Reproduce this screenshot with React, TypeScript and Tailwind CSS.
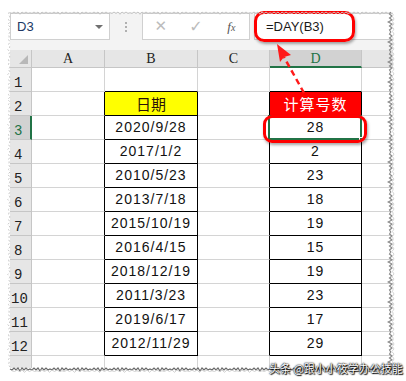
import React from "react";

const rows = [
  { date: "2020/9/28", day: "28" },
  { date: "2017/1/2", day: "2" },
  { date: "2010/5/23", day: "23" },
  { date: "2013/7/18", day: "18" },
  { date: "2015/10/19", day: "19" },
  { date: "2016/4/15", day: "15" },
  { date: "2018/12/19", day: "19" },
  { date: "2011/3/23", day: "23" },
  { date: "2019/6/17", day: "17" },
  { date: "2012/11/29", day: "29" },
];

const cols = ["A", "B", "C", "D"];

function zigzag(x1: number, y1: number, x2: number, y2: number, amp: number, step: number) {
  const pts: string[] = [];
  const len = Math.hypot(x2 - x1, y2 - y1);
  const n = Math.floor(len / step);
  const ux = (x2 - x1) / len;
  const uy = (y2 - y1) / len;
  for (let i = 0; i <= n; i++) {
    const o = (i % 2 === 0 ? 0 : amp) + ((i * 7) % 5 === 0 ? amp * 0.5 : 0);
    pts.push(`${x1 + ux * i * step - uy * o},${y1 + uy * i * step + ux * o}`);
  }
  return pts.join(" ");
}

function TornEdges() {
  return (
    <svg className="pointer-events-none absolute left-0 top-0" width="406" height="381">
      <polyline points={zigzag(10, 12, 393, 12, 1.5, 2)} fill="none" stroke="#c4c4c4" strokeWidth="1" />
      <polyline points={zigzag(10, 12, 10, 368, 1.5, 2.5)} fill="none" stroke="#c8c8c8" strokeWidth="1" strokeDasharray="2 2" />
      <polyline points={zigzag(392, 12, 392, 370, 2.5, 2)} fill="none" stroke="#8c8c8c" strokeWidth="1.2" />
      <polyline points={zigzag(394, 14, 394, 372, 1.5, 2.5)} fill="none" stroke="#d6d6d6" strokeWidth="1" />
      <polyline points={zigzag(10, 368, 393, 368, 2, 2)} fill="none" stroke="#6a6a6a" strokeWidth="1.2" />
      <polyline points={zigzag(12, 370, 394, 370, 1.5, 2.5)} fill="none" stroke="#cfcfcf" strokeWidth="1" />
    </svg>
  );
}

function Arrow() {
  return (
    <svg className="pointer-events-none absolute left-0 top-0" width="406" height="381">
      <line x1="304" y1="93" x2="284" y2="57" stroke="#ff1a1a" strokeWidth="2.5" strokeDasharray="6 4" />
      <polygon points="277,44 291,55 284,57 280,62" fill="#ff1a1a" />
    </svg>
  );
}

export default function App() {
  const cell = "border-r border-b border-[#d4d4d4]";
  const num = "flex items-center justify-center text-[14px] tracking-[1px] text-[#111] [font-family:'Liberation_Sans',Arial,sans-serif]";
  return (
    <div className="relative h-[381px] w-[406px] overflow-hidden bg-white pl-[10px] pt-[12px]">
      <div className="h-[356px] w-[383px] overflow-hidden bg-[#f3f3f3]">
        {/* formula bar */}
        <div className="flex h-[38px] items-start pt-[1px]">
          <div className="flex h-[27px] w-[100px] items-center justify-between border border-[#d0d0d0] bg-white pl-[6px] pr-[6px]">
            <span className="text-[13px] text-[#203864] [font-family:'Liberation_Sans',Arial,sans-serif]">D3</span>
            <span className="h-0 w-0 border-x-[4px] border-t-[4px] border-x-transparent border-t-[#707070]" />
          </div>
          <div className="ml-[15px] mt-[9px] flex h-[10px] flex-col justify-between">
            <span className="h-[2px] w-[2px] bg-[#b0b0b0]" />
            <span className="h-[2px] w-[2px] bg-[#b0b0b0]" />
            <span className="h-[2px] w-[2px] bg-[#b0b0b0]" />
          </div>
          <div className="ml-[15px] flex h-[27px] w-[108px] items-center border border-[#d0d0d0] bg-white text-[#bcbcbc]">
            <span className="w-[36px] text-center text-[15px] leading-none [font-family:'DejaVu_Sans',sans-serif]">✕</span>
            <span className="w-[36px] text-center text-[16px] leading-none [font-family:'DejaVu_Sans',sans-serif]">✓</span>
            <span className="w-[36px] text-center text-[13px] italic text-[#555] [font-family:'Liberation_Serif',serif]">f<span className="text-[10px]">x</span></span>
          </div>
          <div className="ml-[4px] flex h-[27px] flex-1 items-center border border-r-0 border-[#d0d0d0] bg-white pl-[11px]">
            <span className="text-[13px] text-[#1a1a1a] [font-family:'Liberation_Sans',Arial,sans-serif]">=DAY(B3)</span>
          </div>
        </div>

        {/* sheet grid */}
        <div className="grid grid-cols-[22px_73px_93px_72px_92px_31px] grid-rows-[18px_repeat(13,24px)] bg-white">
          <div className="flex items-end justify-end border-r border-b border-[#c6c6c6] bg-[#e6e6e6] pb-[3px] pr-[3px]">
            <span className="h-0 w-0 border-b-[9px] border-l-[9px] border-b-[#b8b8b8] border-l-transparent" />
          </div>
          {cols.map((c) => (
            <div
              key={c}
              className={`flex items-center justify-center border-r border-[#c6c6c6] text-[14px] [font-family:'Liberation_Serif',serif] ${c === "D" ? "border-b-2 border-b-[#217346] bg-[#d2d2d2] text-[#217346]" : "border-b bg-[#e6e6e6] text-[#222]"}`}
            >
              {c}
            </div>
          ))}
          <div className="border-b border-[#c6c6c6] bg-[#e6e6e6]" />

          {/* row 1 */}
          <div className="flex items-end border-r border-b border-[#c6c6c6] bg-[#e6e6e6] pb-[1px] pl-[4px] text-[14px] leading-none text-[#222] [font-family:'Liberation_Mono',monospace]">1</div>
          <div className={cell} />
          <div className={`${cell} border-b-black`} />
          <div className={cell} />
          <div className={`${cell} border-b-black`} />
          <div className="border-b border-[#d4d4d4]" />

          {/* row 2 header */}
          <div className="flex items-end border-r border-b border-[#c6c6c6] bg-[#e6e6e6] pb-[1px] pl-[4px] text-[14px] leading-none text-[#222] [font-family:'Liberation_Mono',monospace]">2</div>
          <div className="border-r border-b border-r-black border-b-[#d4d4d4]" />
          <div className="flex items-center justify-center border-r border-b border-black bg-[#ffff00] pt-[1px] text-[15px] text-[#2a1208] [font-family:'Noto_Sans_CJK_SC',sans-serif]">日期</div>
          <div className="border-r border-b border-r-black border-b-[#d4d4d4]" />
          <div className="flex items-center justify-center border-r border-b border-black bg-[#ff0000] pt-[1px] text-[15px] tracking-[1px] text-white [font-family:'Noto_Sans_CJK_SC',sans-serif]">计算号数</div>
          <div className="border-b border-[#d4d4d4]" />

          {rows.map((r, i) => {
            const n = i + 3;
            const sel = n === 3;
            return (
              <React.Fragment key={n}>
                <div
                  className={`flex items-end border-b border-[#c6c6c6] pb-[1px] text-[14px] leading-none [font-family:'Liberation_Mono',monospace] ${sel ? "border-r-2 border-r-[#217346] bg-[#d2d2d2] text-[#217346]" : "border-r bg-[#e6e6e6] text-[#222]"} ${n >= 10 ? "pl-[1px]" : "pl-[4px]"}`}
                >
                  {n}
                </div>
                <div className="border-r border-b border-r-black border-b-[#d4d4d4]" />
                <div className={`${num} border-r border-b border-black`}>{r.date}</div>
                <div className="border-r border-b border-r-black border-b-[#d4d4d4]" />
                <div className={`${num} relative border-r border-b border-black`}>
                  {r.day}
                  {sel && (
                    <>
                      <span className="absolute -left-[2px] -top-[1px] bottom-[-1px] right-[-1px] border-2 border-[#217346]" />
                      <span className="absolute -bottom-[3px] -right-[3px] h-[5px] w-[5px] border border-white bg-[#217346]" />
                    </>
                  )}
                </div>
                <div className="border-b border-[#d4d4d4]" />
              </React.Fragment>
            );
          })}

          {/* row 13 */}
          <div className="border-r border-[#c6c6c6] bg-[#e6e6e6]" />
          <div className="border-r border-[#d4d4d4]" />
          <div className="border-r border-[#d4d4d4]" />
          <div className="border-r border-[#d4d4d4]" />
          <div className="border-r border-[#d4d4d4]" />
          <div />
        </div>
      </div>

      {/* callouts */}
      <div className="pointer-events-none absolute left-[254px] top-[11px] h-[31px] w-[101px] rounded-[10px] border-[3px] border-[#ff0000] shadow-[1px_2px_3px_rgba(0,0,0,0.35)]" />
      <div className="pointer-events-none absolute left-[263px] top-[115px] h-[28px] w-[104px] rounded-[9px] border-[3px] border-[#ff0000] shadow-[1px_2px_3px_rgba(0,0,0,0.35)]" />
      <Arrow />
      <TornEdges />

      <div className="absolute left-[269px] top-[361px] whitespace-nowrap text-[11px] leading-[14px] text-white [font-family:'Noto_Sans_CJK_SC',sans-serif] [text-shadow:0_0_1px_#000,0_0_2px_#000,1px_1px_1px_#000]">
        头条 @跟小小筱学办公技能
      </div>
    </div>
  );
}
